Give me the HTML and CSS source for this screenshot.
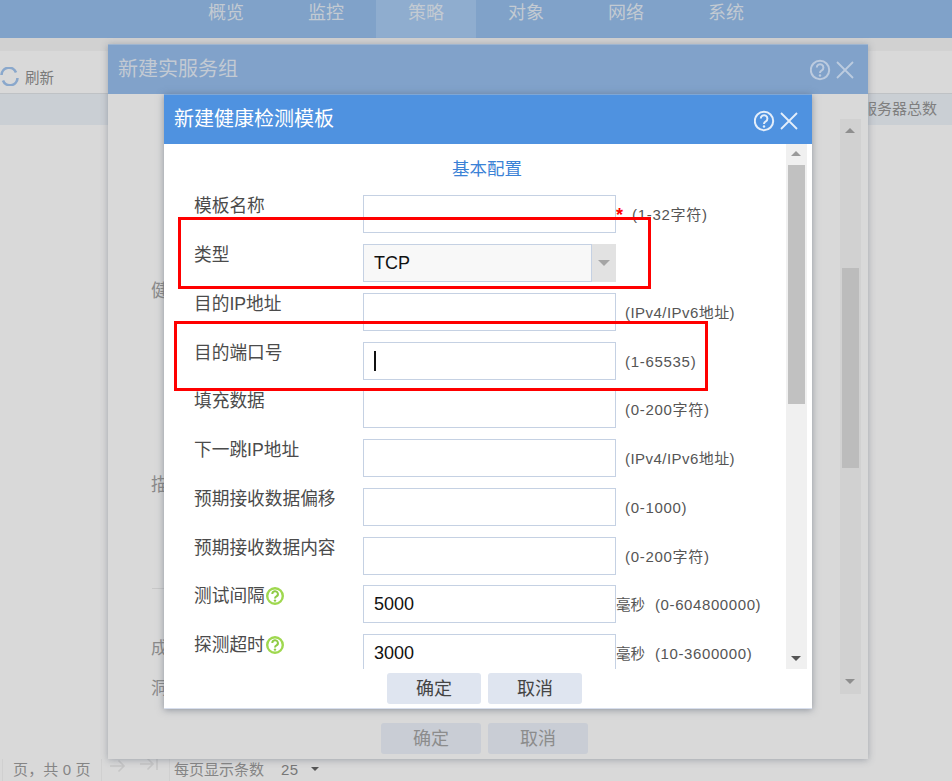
FILE: index.html
```html
<!DOCTYPE html>
<html lang="zh-CN">
<head>
<meta charset="utf-8">
<title>新建健康检测模板</title>
<link rel="stylesheet" href="styles.css">
</head>
<body>
<div class="page">
  <nav class="nav">
    <a class="tab">概览</a><a class="tab">监控</a><a class="tab tab-active">策略</a><a class="tab">对象</a><a class="tab">网络</a><a class="tab">系统</a>
  </nav>
  <div class="toolbar">
    <svg class="refresh" width="19" height="19" viewBox="0 0 19 19"><path d="M1.500 8A7.500 7.500 0 0 1 16 5.500M17.500 11A7.500 7.500 0 0 1 3 13.500" fill="none" stroke="#8aa8cc" stroke-width="2.600"/></svg>
    <span>刷新</span>
  </div>
  <div class="thead">服务器总数</div>
  <div class="grow"></div>
  <footer class="pager">
    <span class="sep"></span>
    <span class="pager-text pager-count">页，共 0 页</span>
    <span class="sep sep-a"></span>
    <svg class="pg-icon" width="18" height="14" viewBox="0 0 18 14"><path d="M1 7H15M9.500 1.500L15 7L9.500 12.500" fill="none" stroke="#c6c6c6" stroke-width="1.600"/></svg>
    <svg class="pg-icon pg-last" width="20" height="14" viewBox="0 0 20 14"><path d="M1 7H14M8.500 1.500L14 7L8.500 12.500M18 1V13" fill="none" stroke="#c6c6c6" stroke-width="1.600"/></svg>
    <span class="sep sep-b"></span>
    <span class="pager-text size-label">每页显示条数</span>
    <span class="pager-text size-value">25</span>
    <span class="caret"></span>
  </footer>
</div>

<section class="outer">
  <header class="outer-head">
    <h2>新建实服务组</h2>
    <svg class="head-icons" width="46" height="22" viewBox="0 0 46 22"><circle cx="10" cy="11" r="9.200" fill="none" stroke="#bccbdf" stroke-width="2"/><path d="M6.800 8.500A3.300 3.300 0 1 1 11.800 11.300C10.500 12 10 12.600 10 14" fill="none" stroke="#bccbdf" stroke-width="2"/><circle cx="10" cy="16.500" r="1.200" fill="#bccbdf"/><path d="M27 3L43 19M43 3L27 19" stroke="#bccbdf" stroke-width="1.800"/></svg>
  </header>
  <div class="outer-body">
    <div class="stubs">
      <span class="stub stub-1">健</span>
      <span class="stub stub-2">描</span>
      <span class="rule"></span>
      <span class="stub stub-3">成</span>
      <span class="stub stub-4">洞</span>
    </div>
    <div class="outer-scroll">
      <span class="arrow-up arrow-dim"></span>
      <span class="outer-thumb"></span>
      <span class="arrow-down arrow-dim"></span>
    </div>
  </div>
  <div class="outer-foot">
    <button class="btn btn-dim">确定</button><button class="btn btn-dim">取消</button>
  </div>
</section>

<section class="inner">
  <header class="inner-head">
    <h2>新建健康检测模板</h2>
    <svg class="head-icons" width="46" height="22" viewBox="0 0 46 22"><circle cx="10" cy="11" r="9.200" fill="none" stroke="#e4eefa" stroke-width="2"/><path d="M6.800 8.500A3.300 3.300 0 1 1 11.800 11.300C10.500 12 10 12.600 10 14" fill="none" stroke="#e4eefa" stroke-width="2"/><circle cx="10" cy="16.500" r="1.200" fill="#e4eefa"/><path d="M27 3L43 19M43 3L27 19" stroke="#e4eefa" stroke-width="1.800"/></svg>
  </header>
  <div class="inner-body">
    <div class="form">
      <div class="form-title">基本配置</div>
      <div class="row"><label class="label">模板名称</label><div class="field"></div><span class="star">*</span><span class="hint hint-star">(1-32字符)</span></div>
      <div class="row"><label class="label">类型</label><div class="field field-select"><span class="select-value">TCP</span><span class="select-btn"><span class="arrow-select"></span></span></div></div>
      <div class="row"><label class="label">目的IP地址</label><div class="field"></div><span class="hint hint-ip">(IPv4/IPv6地址)</span></div>
      <div class="row"><label class="label">目的端口号</label><div class="field"><span class="cursor"></span></div><span class="hint">(1-65535)</span></div>
      <div class="row"><label class="label">填充数据</label><div class="field"></div><span class="hint">(0-200字符)</span></div>
      <div class="row"><label class="label">下一跳IP地址</label><div class="field"></div><span class="hint hint-ip">(IPv4/IPv6地址)</span></div>
      <div class="row"><label class="label">预期接收数据偏移</label><div class="field"></div><span class="hint">(0-1000)</span></div>
      <div class="row"><label class="label">预期接收数据内容</label><div class="field"></div><span class="hint">(0-200字符)</span></div>
      <div class="row"><label class="label">测试间隔<svg class="help" width="18" height="18" viewBox="0 0 18 18"><circle cx="9" cy="9" r="7.800" fill="none" stroke="#9fd84f" stroke-width="2.400"/><path d="M6.300 7A2.800 2.800 0 1 1 10.500 9.400C9.500 10 9 10.500 9 11.500" fill="none" stroke="#8ecb45" stroke-width="2"/><circle cx="9" cy="13.600" r="1.200" fill="#8ecb45"/></svg></label><div class="field"><span class="field-value">5000</span></div><span class="unit">毫秒</span><span class="hint hint-unit">(0-604800000)</span></div>
      <div class="row"><label class="label">探测超时<svg class="help" width="18" height="18" viewBox="0 0 18 18"><circle cx="9" cy="9" r="7.800" fill="none" stroke="#9fd84f" stroke-width="2.400"/><path d="M6.300 7A2.800 2.800 0 1 1 10.500 9.400C9.500 10 9 10.500 9 11.500" fill="none" stroke="#8ecb45" stroke-width="2"/><circle cx="9" cy="13.600" r="1.200" fill="#8ecb45"/></svg></label><div class="field"><span class="field-value">3000</span></div><span class="unit">毫秒</span><span class="hint hint-unit">(10-3600000)</span></div>
    </div>
    <div class="inner-scroll">
      <span class="arrow-up"></span>
      <span class="inner-thumb"></span>
      <span class="arrow-down"></span>
    </div>
  </div>
  <div class="inner-foot">
    <button class="btn btn-inner">确定</button><button class="btn btn-inner">取消</button>
  </div>
</section>

<div class="mark mark-1"></div>
<div class="mark mark-2"></div>
</body>
</html>
```

FILE: styles.css
```css
* { box-sizing: border-box; }
html, body { margin: 0; padding: 0; height: 100%; overflow: hidden; }
body {
  background: #d9d9d9;
  font-family: "Liberation Sans", "Noto Sans CJK SC", sans-serif;
  color: #444;
}
h2 { margin: 0; font-weight: 400; }

.page { display: flex; flex-direction: column; height: 781px; }
.nav {
  display: flex;
  height: 38px;
  padding-left: 176px;
  background: #80a2c9;
  flex: none;
}
.tab {
  width: 100px;
  text-align: center;
  font-size: 18px;
  line-height: 27px;
  color: #c3cad2;
}
.tab-active { background: #8fadcf; }

.toolbar {
  margin-top: 12px;
  height: 44px;
  flex: none;
  display: flex;
  align-items: center;
  padding-top: 9px;
  background: #d9d9d9;
  border-top: 1px solid #d2d2d2;
  border-bottom: 1px solid #bfc2c5;
  font-size: 14.500px;
  color: #7a7a7a;
  box-shadow: 0 -12px 0 #d1d1d1;
}
.refresh { margin-right: 6px; }

.thead {
  height: 31px;
  flex: none;
  background: #cacfd4;
  text-align: right;
  padding-right: 15px;
  font-size: 15px;
  line-height: 30px;
  color: #7f7f7f;
}
.grow { flex: 1; }

.pager {
  height: 22px;
  flex: none;
  display: flex;
  align-items: center;
}
.sep { width: 1px; height: 22px; background: #d0d0d0; margin-left: 2px; }
.pager-text { font-size: 15px; line-height: 20px; color: #858585; }
.pager-count { margin-left: 10px; width: 79px; white-space: nowrap; letter-spacing: .15px; }
.sep-a { margin-left: 9px; }
.pg-icon { margin-left: 7px; margin-top: -9px; }
.pg-last { margin-left: 12px; margin-top: -12px; }
.sep-b { margin-left: 10px; }
.size-label { margin-left: 4px; }
.size-value { margin-left: 17px; color: #777; letter-spacing: .5px; }
.caret {
  margin-left: 12px;
  margin-top: -2px;
  border: 4px solid transparent;
  border-top: 4px solid #555;
  border-bottom: 0;
}

.outer {
  position: absolute;
  left: 108px;
  top: 44px;
  width: 760px;
  height: 715px;
  display: flex;
  flex-direction: column;
  background: #d9d9d9;
  box-shadow: 0 1px 7px rgba(90, 100, 115, .45);
}
.outer-head {
  height: 50px;
  flex: none;
  display: flex;
  justify-content: space-between;
  align-items: center;
  background: #81a2ca;
  border-top: 1px solid #9eb5d0;
  padding: 0 12px 0 10px;
}
.outer-head h2 { font-size: 20px; color: #c3cad3; margin-top: -4px; }
.outer-body { position: relative; flex: 1; display: flex; min-height: 0; }
.stubs { position: relative; flex: 1; }
.stub {
  position: absolute;
  left: 43px;
  font-size: 18px;
  line-height: 20px;
  color: #8a8a8a;
}
.stub-1 { top: 187px; }
.stub-2 { top: 381px; }
.rule { position: absolute; left: 44px; top: 494px; width: 30px; height: 1px; background: #c8c8c8; }
.stub-3 { top: 545px; font-size: 17px; }
.stub-4 { top: 585px; font-size: 17px; }
.outer-scroll {
  position: relative;
  width: 21px;
  margin: 25px 7px 0 0;
  height: 575px;
  background: #d1d1d1;
  flex: none;
}
.outer-thumb {
  position: absolute;
  left: 2px;
  top: 149px;
  width: 17px;
  height: 200px;
  background: #bcbcbc;
}
.outer-foot {
  height: 50px;
  flex: none;
  display: flex;
  gap: 7px;
  padding-left: 273px;
  padding-top: 14px;
}
.btn {
  border: 0;
  border-radius: 3px;
  height: 31px;
  padding: 2px 0 0;
  font: 18px/29px "Liberation Sans", "Noto Sans CJK SC", sans-serif;
}
.btn-dim { width: 100px; background: #c9cdd5; color: #8c8c8c; }

.arrow-up, .arrow-down, .arrow-select {
  position: absolute;
  width: 0;
  height: 0;
  border-left: 5px solid transparent;
  border-right: 5px solid transparent;
}
.arrow-up { left: 5px; top: 7px; border-bottom: 5px solid #9a9a9a; }
.arrow-down { left: 5px; bottom: 8px; border-top: 5px solid #555; }
.arrow-dim.arrow-up { top: 9px; border-bottom-color: #8e8e8e; }
.arrow-dim.arrow-down { bottom: 10px; border-top-color: #8e8e8e; }

.inner {
  position: absolute;
  left: 164px;
  top: 94px;
  width: 648px;
  height: 615px;
  display: flex;
  flex-direction: column;
  background: #fff;
  border-bottom: 1px solid #d7deec;
  box-shadow: 0 1px 7px rgba(80, 90, 105, .55);
}
.inner-head {
  height: 50px;
  flex: none;
  display: flex;
  justify-content: space-between;
  align-items: center;
  background: #4f92e0;
  border-top: 1px solid #7fa7d6;
  padding: 0 12px 0 10px;
}
.inner-head h2 { font-size: 20px; color: #fff; margin-top: -4px; }
.inner-head .head-icons { margin-top: 3px; }
.inner-body { flex: 1; display: flex; min-height: 0; padding-right: 5px; }
.form { flex: 1; overflow: hidden; padding-left: 30px; }
.form-title {
  height: 51.450px;
  padding-right: 6px;
  text-align: center;
  font-size: 17.500px;
  line-height: 50px;
  color: #3b82d6;
}
.row { display: flex; align-items: center; height: 48.750px; }
.row .label {
  align-self: flex-start;
  width: 169px;
  flex: none;
  display: flex;
  align-items: center;
  height: 20px;
  margin-top: 1px;
  font-size: 17.700px;
  line-height: 20px;
  color: #4b4b4b;
  white-space: nowrap;
}
.help { margin-left: 1px; }
.field {
  position: relative;
  flex: none;
  align-self: flex-start;
  width: 253px;
  height: 38px;
  border: 1px solid #c5d1e3;
  background: #fff;
  display: flex;
  align-items: center;
}
.field-value {
  margin-left: 10px;
  font-size: 18px;
  color: #111;
}
.field-select { background: #f8f8f8; border-right: 0; }
.select-value { margin-left: 10px; font-size: 18px; color: #111; }
.select-btn {
  position: absolute;
  top: -1px;
  right: 0;
  width: 25px;
  height: 38px;
  background: #e2e2e2;
  border-left: 1px solid #c5d1e3;
}
.arrow-select { left: 6px; top: 16px; border-top: 6px solid #a5a5a5; border-left-width: 6px; border-right-width: 6px; }
.cursor {
  position: absolute;
  left: 10px;
  top: 8px;
  width: 2px;
  height: 20px;
  background: #111;
}
.hint, .unit, .star { align-self: flex-start; margin-top: 1px; line-height: 38px; font-size: 15px; color: #555; white-space: nowrap; }
.hint { margin-left: 9px; letter-spacing: .7px; }
.hint-ip { letter-spacing: .45px; }
.star { color: #f00; font-size: 18px; font-weight: 700; }
.unit { font-size: 14.500px; }
.hint-unit { margin-left: 10px; letter-spacing: .6px; }
.inner-scroll {
  position: relative;
  flex: none;
  width: 21px;
  background: #f0f0f0;
}
.inner-thumb {
  position: absolute;
  left: 2px;
  top: 21px;
  width: 17px;
  height: 239px;
  background: #c1c1c1;
}
.inner-foot {
  height: 39px;
  flex: none;
  display: flex;
  gap: 7px;
  padding-left: 223px;
  padding-top: 4px;
}
.btn-inner { width: 94px; background: #dfe5f0; color: #444; }

.mark {
  position: absolute;
  border: 3px solid #f00;
}
.mark-1 { left: 178px; top: 217px; width: 473px; height: 72px; }
.mark-2 { left: 174px; top: 321px; width: 534px; height: 70px; }
```
